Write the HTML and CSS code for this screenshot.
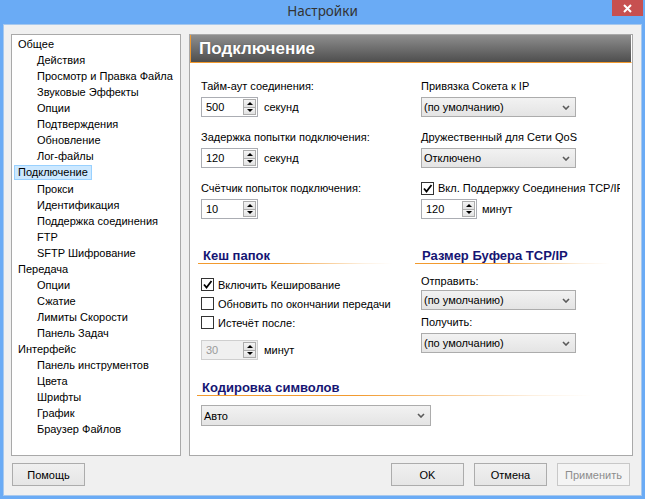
FILE: index.html
```html
<!DOCTYPE html>
<html>
<head>
<meta charset="utf-8">
<title>Настройки</title>
<link rel="stylesheet" href="styles.css">
</head>
<body>
<div class="window">
  <div class="titlebar">
    <div class="title">Настройки</div>
    <div class="close">
      <svg width="9" height="9" viewBox="0 0 9 9"><path d="M1 1 L8 8 M8 1 L1 8" stroke="#fff" stroke-width="2" fill="none"/></svg>
    </div>
  </div>
  <div class="client">
    <div class="panels">
      <div class="tree">
        <div class="node">Общее</div>
        <div class="node child">Действия</div>
        <div class="node child">Просмотр и Правка Файла</div>
        <div class="node child">Звуковые Эффекты</div>
        <div class="node child">Опции</div>
        <div class="node child">Подтверждения</div>
        <div class="node child">Обновление</div>
        <div class="node child">Лог-файлы</div>
        <div class="node"><div class="sel">Подключение</div></div>
        <div class="node child">Прокси</div>
        <div class="node child">Идентификация</div>
        <div class="node child">Поддержка соединения</div>
        <div class="node child">FTP</div>
        <div class="node child">SFTP Шифрование</div>
        <div class="node">Передача</div>
        <div class="node child">Опции</div>
        <div class="node child">Сжатие</div>
        <div class="node child">Лимиты Скорости</div>
        <div class="node child">Панель Задач</div>
        <div class="node">Интерфейс</div>
        <div class="node child">Панель инструментов</div>
        <div class="node child">Цвета</div>
        <div class="node child">Шрифты</div>
        <div class="node child">График</div>
        <div class="node child">Браузер Файлов</div>
      </div>
      <div class="page">
        <div class="page-header">Подключение</div>
        <div class="page-body">
          <div class="grid">
            <div class="col">
              <div class="field">
                <div class="label">Тайм-аут соединения:</div>
                <div class="inline">
                  <div class="spin"><div class="spin-val">500</div><div class="spin-btns"><div class="sb"><span class="tri-up"></span></div><div class="sb"><span class="tri-down"></span></div></div></div>
                  <span class="unit">секунд</span>
                </div>
              </div>
              <div class="field">
                <div class="label">Задержка попытки подключения:</div>
                <div class="inline">
                  <div class="spin"><div class="spin-val">120</div><div class="spin-btns"><div class="sb"><span class="tri-up"></span></div><div class="sb"><span class="tri-down"></span></div></div></div>
                  <span class="unit">секунд</span>
                </div>
              </div>
              <div class="field">
                <div class="label">Счётчик попыток подключения:</div>
                <div class="inline">
                  <div class="spin"><div class="spin-val">10</div><div class="spin-btns"><div class="sb"><span class="tri-up"></span></div><div class="sb"><span class="tri-down"></span></div></div></div>
                </div>
              </div>
            </div>
            <div class="col">
              <div class="field">
                <div class="label">Привязка Сокета к IP</div>
                <div class="combo"><span>(по умолчанию)</span><svg class="chev" width="8" height="5" viewBox="0 0 8 5"><path d="M1 1 L4 4 L7 1" stroke="#5a5a5a" stroke-width="1.6" fill="none"/></svg></div>
              </div>
              <div class="field">
                <div class="label">Дружественный для Сети QoS</div>
                <div class="combo"><span>Отключено</span><svg class="chev" width="8" height="5" viewBox="0 0 8 5"><path d="M1 1 L4 4 L7 1" stroke="#5a5a5a" stroke-width="1.6" fill="none"/></svg></div>
              </div>
              <div class="field">
                <div class="check clip">
                  <span class="box"><svg width="11" height="11" viewBox="0 0 11 11"><path d="M2 5.5 L4.5 8.5 L9.5 2" stroke="#000" stroke-width="1.8" fill="none"/></svg></span>
                  <span class="ctext">Вкл. Поддержку Соединения TCP/IP</span>
                </div>
                <div class="inline gap4">
                  <div class="spin narrow"><div class="spin-val">120</div><div class="spin-btns"><div class="sb"><span class="tri-up"></span></div><div class="sb"><span class="tri-down"></span></div></div></div>
                  <span class="unit">минут</span>
                </div>
              </div>
            </div>
            <div class="col">
              <div class="sect-title left-sect">Кеш папок</div>
              <div class="sect-line left-line"></div>
              <div class="checks">
                <div class="check">
                  <span class="box"><svg width="11" height="11" viewBox="0 0 11 11"><path d="M2 5.5 L4.5 8.5 L9.5 2" stroke="#000" stroke-width="1.8" fill="none"/></svg></span>
                  <span class="ctext">Включить Кеширование</span>
                </div>
                <div class="check">
                  <span class="box"></span>
                  <span class="ctext">Обновить по окончании передачи</span>
                </div>
                <div class="check">
                  <span class="box"></span>
                  <span class="ctext">Истечёт после:</span>
                </div>
              </div>
              <div class="inline expire">
                <div class="spin disabled"><div class="spin-val">30</div><div class="spin-btns"><div class="sb"><span class="tri-up"></span></div><div class="sb"><span class="tri-down"></span></div></div></div>
                <span class="unit">минут</span>
              </div>
            </div>
            <div class="col">
              <div class="sect-title right-sect">Размер Буфера TCP/IP</div>
              <div class="sect-line right-line"></div>
              <div class="label send">Отправить:</div>
              <div class="combo"><span>(по умолчанию)</span><svg class="chev" width="8" height="5" viewBox="0 0 8 5"><path d="M1 1 L4 4 L7 1" stroke="#5a5a5a" stroke-width="1.6" fill="none"/></svg></div>
              <div class="label recv">Получить:</div>
              <div class="combo"><span>(по умолчанию)</span><svg class="chev" width="8" height="5" viewBox="0 0 8 5"><path d="M1 1 L4 4 L7 1" stroke="#5a5a5a" stroke-width="1.6" fill="none"/></svg></div>
            </div>
          </div>
          <div class="encoding">
            <div class="sect-title enc-sect">Кодировка символов</div>
            <div class="sect-line enc-line"></div>
            <div class="combo wide"><span>Авто</span><svg class="chev" width="8" height="5" viewBox="0 0 8 5"><path d="M1 1 L4 4 L7 1" stroke="#5a5a5a" stroke-width="1.6" fill="none"/></svg></div>
          </div>
        </div>
      </div>
    </div>
    <div class="buttons">
      <div class="btn">Помощь</div>
      <div class="btn-group">
        <div class="btn">OK</div>
        <div class="btn">Отмена</div>
        <div class="btn disabled">Применить</div>
      </div>
    </div>
  </div>
</div>
</body>
</html>
```
FILE: styles.css
```css
* { box-sizing: border-box; margin: 0; padding: 0; }
html, body { width: 645px; height: 499px; overflow: hidden; }
body {
  font-family: "Liberation Sans", Arial, sans-serif;
  font-size: 11px;
  color: #000;
  background: #6aabf5;
}
.window {
  width: 645px;
  height: 499px;
  display: flex;
  flex-direction: column;
  background: #6aabf5;
}
.titlebar {
  height: 24px;
  display: grid;
  grid-template-columns: 1fr auto 1fr;
  align-items: start;
}
.title {
  grid-column: 2;
  font-family: "Noto Sans", "Open Sans", sans-serif;
  font-size: 13.5px;
  color: #333;
  line-height: 23px;
}
.close {
  grid-column: 3;
  justify-self: end;
  width: 31px;
  height: 16px;
  margin-right: 2px;
  background: #c75050;
  display: flex;
  align-items: center;
  justify-content: center;
}
.client {
  flex: 1;
  margin: 0 3px 3px;
  border: 1px solid #a6c8ee;
  background: #f0f0f0;
  padding: 9px 8px 0 7px;
}
.panels {
  display: flex;
  gap: 8px;
  height: 422px;
}
.tree {
  width: 170px;
  border: 1px solid #a9a9a9;
  background: #fff;
  padding-top: 1px;
  overflow: hidden;
}
.node {
  height: 16px;
  line-height: 16px;
  padding-left: 6px;
  white-space: nowrap;
}
.node.child { padding-left: 25px; }
.sel {
  width: fit-content;
  margin: 1px 0 0 -4px;
  padding: 0 3px;
  height: 15px;
  line-height: 13px;
  background: #cce8ff;
  border: 1px solid #99d1ff;
}
.page {
  flex: 1;
  border: 1px solid #a9a9a9;
  background: #fff;
  display: flex;
  flex-direction: column;
}
.page-header {
  height: 28px;
  background: linear-gradient(#8e8e8e, #4e4e4e);
  border-left: 1px solid #f29a2e;
  border-bottom: 1px solid #f29a2e;
  border-right: 1px solid #fff;
  color: #fff;
  font-weight: bold;
  font-size: 17px;
  line-height: 27px;
  padding-left: 8px;
  text-shadow: 0 0 1px #444;
}
.page-body {
  padding: 16px 0 0 11px;
}
.grid {
  display: grid;
  grid-template-columns: 220px 1fr;
  row-gap: 29px;
}
.col {
  display: flex;
  flex-direction: column;
}
.col > .field + .field { margin-top: 13px; }
.field {
  display: flex;
  flex-direction: column;
}
.label {
  height: 14px;
  line-height: 14px;
  margin-bottom: 4px;
  white-space: nowrap;
}
.inline {
  display: flex;
  align-items: center;
  gap: 6px;
}
.inline.gap4 { gap: 5px; }
.spin {
  width: 57px;
  height: 20px;
  border: 1px solid #abadb3;
  background: #fff;
  display: flex;
}
.spin.narrow { width: 56px; }
.spin-val {
  flex: 1;
  padding-left: 4px;
  line-height: 18px;
}
.spin-btns {
  width: 13px;
  margin: 1px 1px 1px 0;
  display: flex;
  flex-direction: column;
}
.sb {
  flex: 1;
  border: 1px solid #acacac;
  background: linear-gradient(#f4f4f4, #e2e2e2);
  display: flex;
  align-items: center;
  justify-content: center;
}
.sb + .sb { border-top: none; }
.tri-up {
  width: 0; height: 0;
  border-left: 3px solid transparent;
  border-right: 3px solid transparent;
  border-bottom: 3px solid #000;
}
.tri-down {
  width: 0; height: 0;
  border-left: 3px solid transparent;
  border-right: 3px solid transparent;
  border-top: 3px solid #000;
}
.spin.disabled { background: #f0f0f0; border-color: #cfcfcf; color: #9a9a9a; }
.unit { white-space: nowrap; }
.combo {
  width: 155px;
  height: 20px;
  border: 1px solid #acacac;
  background: linear-gradient(#f2f2f2, #e4e4e4);
  display: flex;
  align-items: center;
  justify-content: space-between;
  padding: 0 5px 0 2px;
  white-space: nowrap;
}
.combo.wide { width: 230px; height: 21px; }
.check {
  display: flex;
  align-items: center;
  gap: 4px;
  height: 19px;
  white-space: nowrap;
}
.check.clip {
  height: 14px;
  margin-bottom: 4px;
  width: 199px;
  overflow: hidden;
}
.box {
  flex: none;
  width: 13px;
  height: 13px;
  border: 1px solid #333;
  background: #fff;
  display: flex;
  align-items: center;
  justify-content: center;
}
.sect-title {
  height: 15px;
  line-height: 15px;
  font-weight: bold;
  font-size: 13px;
  color: #151573;
  white-space: nowrap;
}
.sect-line {
  height: 1px;
  background: linear-gradient(to right, #f29a2e 0%, #f29a2e 40%, rgba(242, 154, 46, 0.15) 85%, rgba(242, 154, 46, 0) 100%);
}
.left-sect { margin-left: -3px; padding-left: 5px; }
.left-line { margin-left: -3px; width: 194px; }
.right-sect { margin-left: -6px; padding-left: 7px; }
.right-line { margin-left: -6px; width: 195px; }
.enc-sect { margin-left: -4px; padding-left: 5px; }
.enc-line { margin-left: -4px; width: 395px; }
.checks { margin-top: 11px; }
.expire { margin-top: 8px; }
.label.send { margin-top: 10px; margin-bottom: 2px; }
.label.recv { margin-top: 5px; margin-bottom: 4px; }
.encoding { margin-top: 20px; }
.encoding .combo { margin-top: 9px; }
.buttons {
  display: flex;
  justify-content: space-between;
  margin-top: 7px;
  padding: 0 3px 0 1px;
}
.btn-group { display: flex; gap: 10px; }
.btn {
  width: 73px;
  height: 23px;
  border: 1px solid #acacac;
  background: linear-gradient(#f0f0f0, #e5e5e5);
  display: flex;
  align-items: center;
  justify-content: center;
}
.btn.disabled {
  color: #8d8d8d;
  border-color: #c8c8c8;
  background: #f4f4f4;
}
```
